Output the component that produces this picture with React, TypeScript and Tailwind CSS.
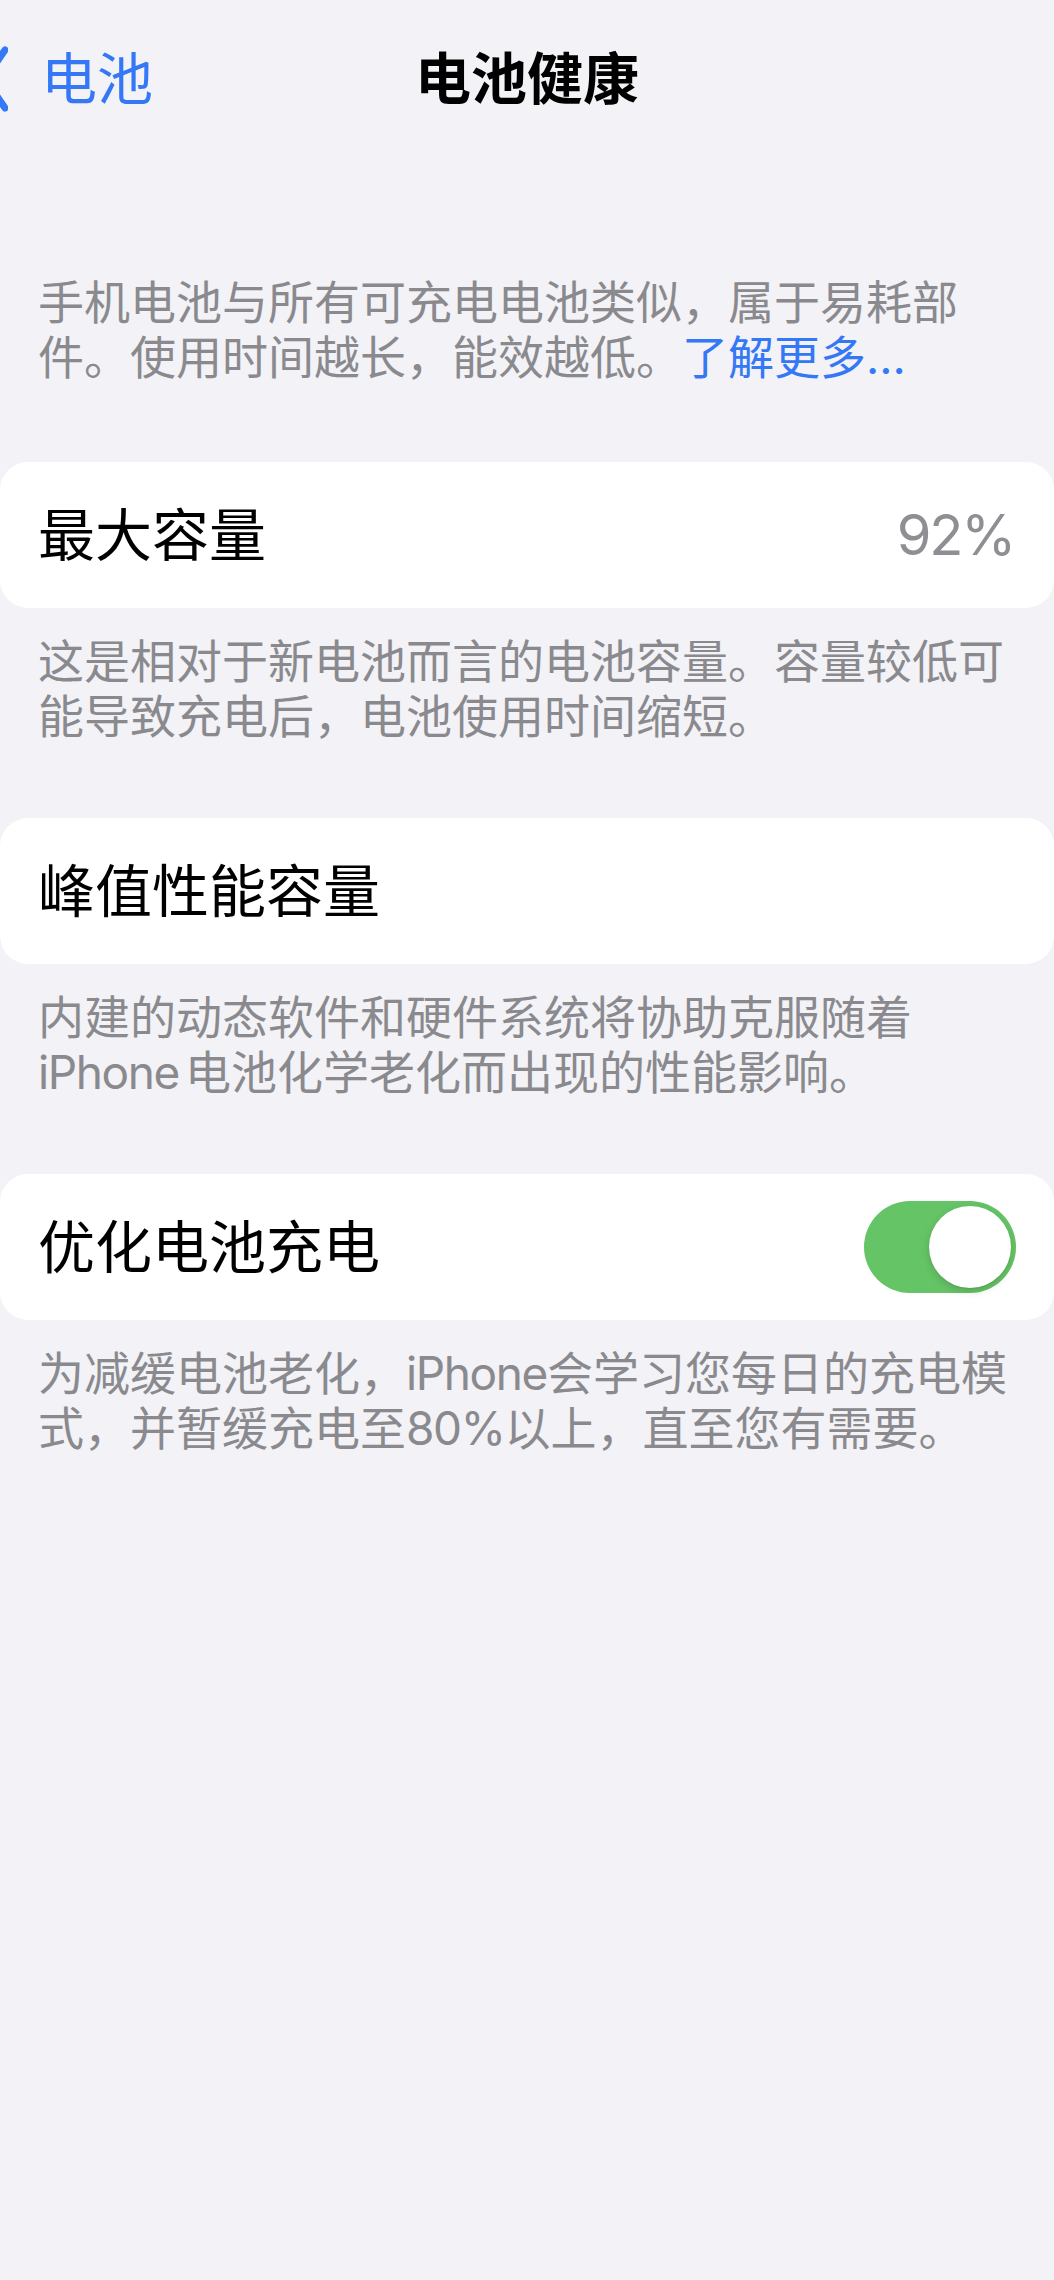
import { useState } from 'react';

function Toggle({ on, onChange }: { on: boolean; onChange: () => void }) {
  return (
    <button
      onClick={onChange}
      className={`flex h-[92px] w-[152px] items-center rounded-full p-[5px] ${
        on ? 'justify-end bg-[#65c466]' : 'justify-start bg-[#e9e9eb]'
      }`}
    >
      <span className="block h-[82px] w-[82px] rounded-full bg-white shadow-[0_3px_8px_rgba(0,0,0,0.15),0_1px_1px_rgba(0,0,0,0.08)]" />
    </button>
  );
}

function Footer({ lines }: { lines: React.ReactNode[] }) {
  return (
    <div className="mt-[26px] px-[38px] text-[46px] leading-[55px] text-[#8a8a8e]">
      {lines.map((l, i) => (
        <div key={i} className="whitespace-nowrap">
          {l}
        </div>
      ))}
    </div>
  );
}

// latin runs are a touch tighter than Inter's default
const Lat = ({ children }: { children: React.ReactNode }) => (
  <span className="tracking-[-0.03em]">{children}</span>
);

export default function App() {
  const [optimized, setOptimized] = useState(true);

  return (
    <div className="min-h-[2280px] w-full overflow-hidden bg-[#f2f2f7] font-[Inter,'Noto_Sans_CJK_SC',sans-serif] text-black">
      {/* nav */}
      <div className="grid h-[158px] grid-cols-[1fr_auto_1fr] items-center">
        <div className="flex items-center text-[56px] leading-[56px] text-[#3478f6]">
          <svg className="-ml-[18px]" width="26" height="66" viewBox="0 0 26 66" fill="none">
            <polyline
              points="23,4 3,33 23,62"
              stroke="#3478f6"
              strokeWidth="7"
              strokeLinecap="round"
              strokeLinejoin="round"
            />
          </svg>
          <span className="ml-[33px]">电池</span>
        </div>
        <div className="text-[56px] leading-[56px] font-semibold">电池健康</div>
        <div />
      </div>

      {/* intro */}
      <div className="mt-[117px] px-[38px] text-[46px] leading-[55px] text-[#8a8a8e]">
        <div className="whitespace-nowrap">手机电池与所有可充电电池类似，属于易耗部</div>
        <div className="whitespace-nowrap">
          件。使用时间越长，能效越低。<span className="text-[#3478f6]">了解更多...</span>
        </div>
      </div>

      {/* max capacity */}
      <div className="mt-[77px] flex h-[146px] items-center justify-between rounded-[28px] bg-white pl-[38px] pr-[40px]">
        <span className="text-[57px] leading-[57px]">最大容量</span>
        <span className="text-[56px] leading-[56px] tracking-[-0.04em] text-[#8e8e93]">92%</span>
      </div>
      <Footer
        lines={['这是相对于新电池而言的电池容量。容量较低可', '能导致充电后，电池使用时间缩短。']}
      />

      {/* peak performance */}
      <div className="mt-[74px] flex h-[146px] items-center rounded-[28px] bg-white pl-[38px]">
        <span className="text-[57px] leading-[57px]">峰值性能容量</span>
      </div>
      <Footer
        lines={[
          '内建的动态软件和硬件系统将协助克服随着',
          <>
            <Lat>iPhone</Lat>
            <span className="ml-[6px]">电池化学老化而出现的性能影响。</span>
          </>,
        ]}
      />

      {/* optimized charging */}
      <div className="mt-[74px] flex h-[146px] items-center justify-between rounded-[28px] bg-white pl-[38px] pr-[38px]">
        <span className="text-[57px] leading-[57px]">优化电池充电</span>
        <Toggle on={optimized} onChange={() => setOptimized((v) => !v)} />
      </div>
      <Footer
        lines={[
          <>
            为减缓电池老化，<Lat>iPhone</Lat>会学习您每日的充电模
          </>,
          <>
            式，并暂缓充电至<Lat>80%</Lat>以上，直至您有需要。
          </>,
        ]}
      />
    </div>
  );
}
